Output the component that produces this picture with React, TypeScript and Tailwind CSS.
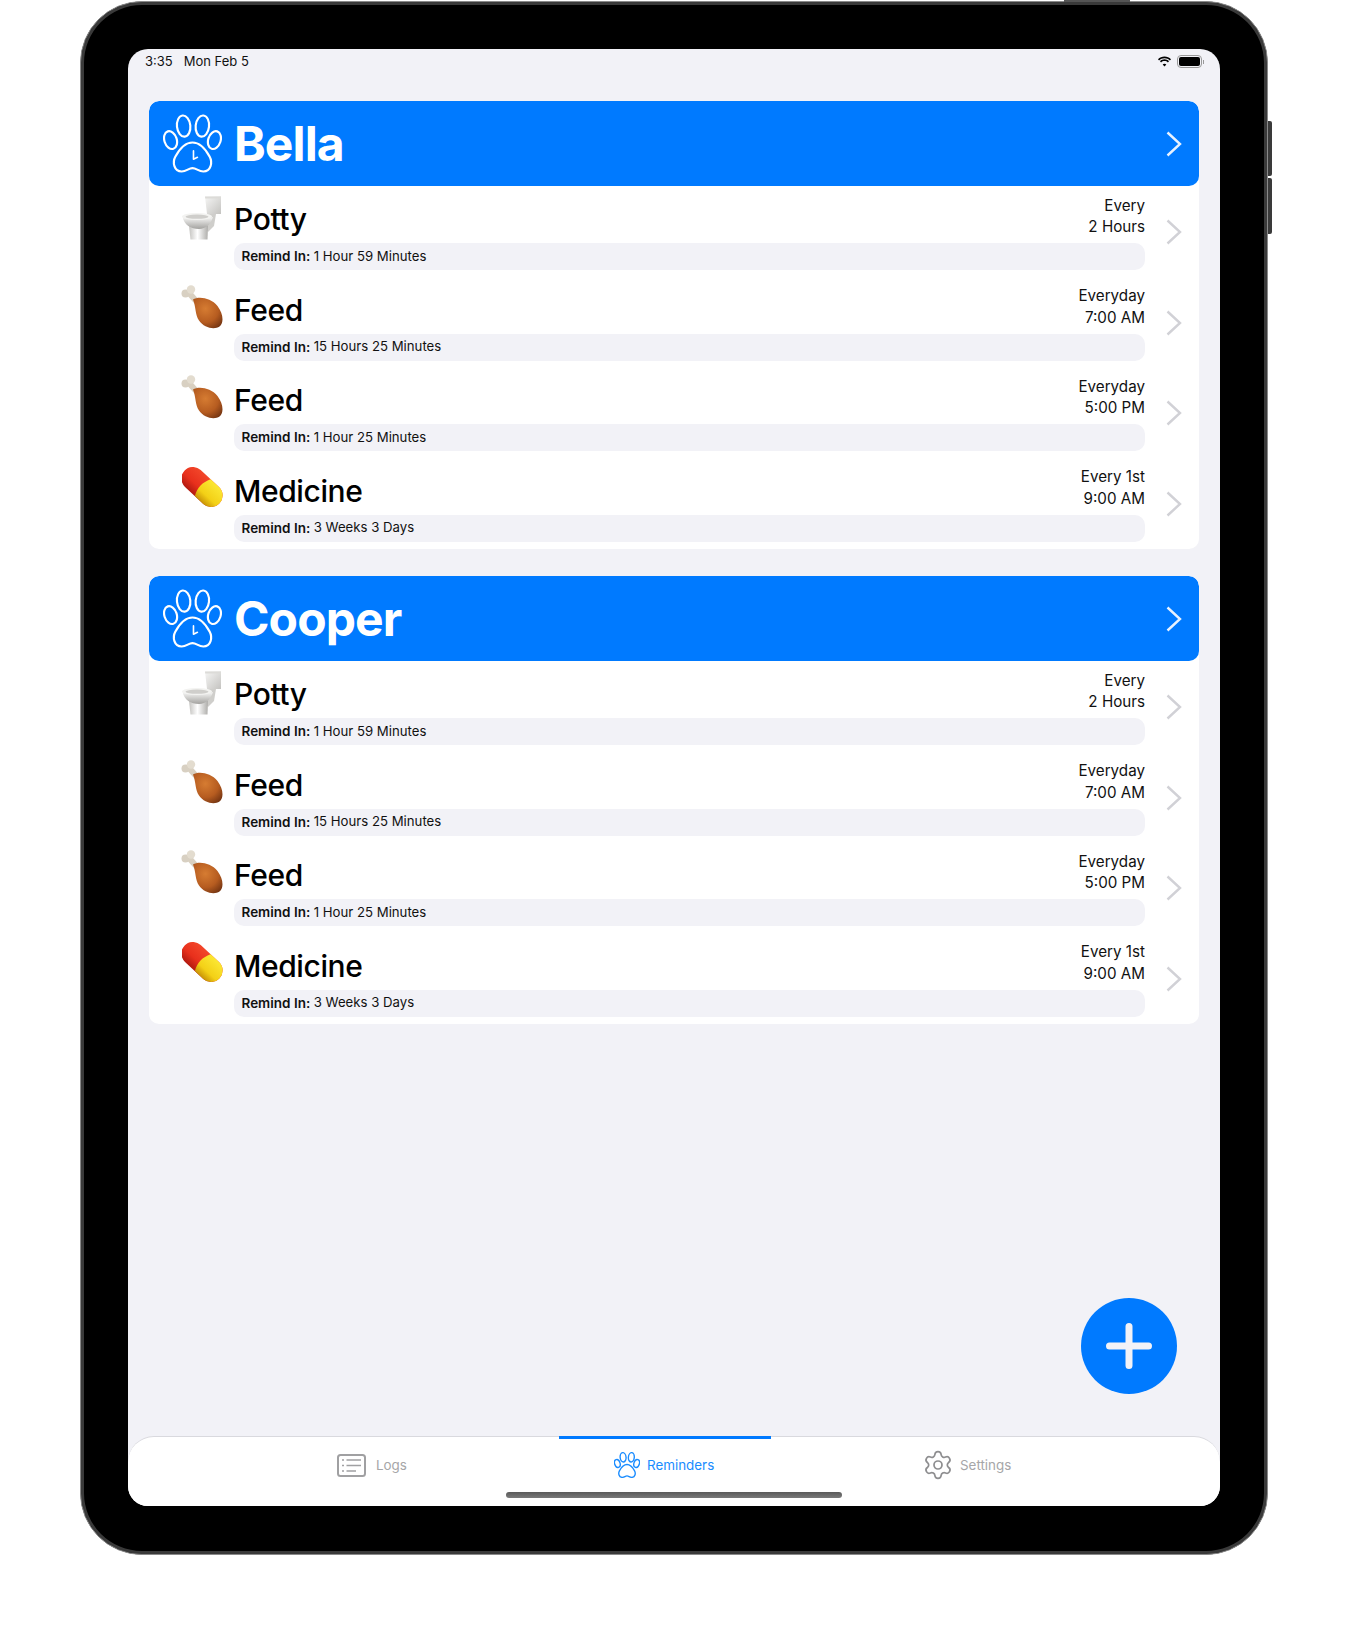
import React from "react";
import { Settings } from "lucide-react";

function Paw({ size, clock, sw }: { size: number; clock?: boolean; sw: number }) {
  return (
    <svg width={size} height={size} viewBox="0 0 60 60" fill="none" stroke="currentColor" strokeWidth={sw} strokeLinecap="round" strokeLinejoin="round">
      <ellipse cx="7.700" cy="26.500" rx="6.300" ry="9.300" transform="rotate(-18 7.700 26.500)" />
      <ellipse cx="21" cy="12.300" rx="6.800" ry="10.800" transform="rotate(-6 21 12.300)" />
      <ellipse cx="40" cy="12.300" rx="6.800" ry="10.800" transform="rotate(6 40 12.300)" />
      <ellipse cx="52.300" cy="26.500" rx="6.300" ry="9.300" transform="rotate(18 52.300 26.500)" />
      <path d="M30 29C21 29 16 37 12.500 43.500C9.500 49 11 58.500 19 58.500C24 58.500 26 55 30 55C34 55 36 58.500 41 58.500C49 58.500 50.500 49 47.500 43.500C44 37 39 29 30 29Z" />
      {clock && <path d="M31 37.500V46L35 44" strokeWidth={sw * 0.75} />}
    </svg>
  );
}

function Toilet({ id }: { id: string }) {
  return (
    <svg width="40" height="45" viewBox="0 0 40 45">
      <defs>
        <linearGradient id={`${id}t`} x1="0" x2="1" y1="0" y2="1">
          <stop offset="0" stopColor="#f6f6f5" />
          <stop offset="1" stopColor="#c4c3c0" />
        </linearGradient>
        <linearGradient id={`${id}w`} x1="0" x2="0" y1="0" y2="1">
          <stop offset="0" stopColor="#fbfbfa" />
          <stop offset="1" stopColor="#a3a29f" />
        </linearGradient>
        <linearGradient id={`${id}s`} x1="0" x2="1" y1="0" y2="0">
          <stop offset="0" stopColor="#c4c3c0" />
          <stop offset="0.45" stopColor="#ffffff" />
          <stop offset="1" stopColor="#aeadaa" />
        </linearGradient>
      </defs>
      <path d="M23 0.500H39V18H25Z" fill={`url(#${id}t)`} />
      <path d="M23 0.500H39V2.500H23.200Z" fill="#dcdbd8" />
      <path d="M24 18H34L32 30L26 36L20 26Z" fill="#cfcecb" />
      <path d="M7 30H26L25.500 43.500H8.500Z" fill={`url(#${id}s)`} />
      <path d="M0.500 20.500C2 29 9 33 17 33C24 33 29 28 31 21C22 24 8 24 0.500 20.500Z" fill={`url(#${id}w)`} />
      <ellipse cx="15" cy="20.500" rx="15" ry="3.500" fill="#f3f3f1" />
      <ellipse cx="15" cy="20.700" rx="11.500" ry="2.100" fill="#cfcecb" />
    </svg>
  );
}

function Drumstick({ id }: { id: string }) {
  return (
    <svg width="42" height="44" viewBox="0 0 42 44">
      <defs>
        <radialGradient id={id} cx="0.42" cy="0.36" r="0.72">
          <stop offset="0" stopColor="#d67c32" />
          <stop offset="0.62" stopColor="#b65c20" />
          <stop offset="1" stopColor="#7a3813" />
        </radialGradient>
      </defs>
      <path d="M8 8L16 17" stroke="#d9d0c1" strokeWidth="6" />
      <circle cx="4.500" cy="8.500" r="4" fill="#d8d0c2" />
      <circle cx="10" cy="4.500" r="4.200" fill="#e3dccf" />
      <path d="M12 14.500C18 11 30 13 36.500 21C42.500 29 43 38 38.500 41.500C33.500 45 23 43 18 35.500C14 29.500 15 22 12 14.500Z" fill={`url(#${id})`} />
    </svg>
  );
}

function Pill({ id }: { id: string }) {
  return (
    <svg width="41" height="41" viewBox="0 0 41 41">
      <defs>
        <linearGradient id={`${id}r`} x1="0" x2="0" y1="0" y2="1">
          <stop offset="0" stopColor="#f2462a" />
          <stop offset="0.6" stopColor="#e8301c" />
          <stop offset="1" stopColor="#b31a10" />
        </linearGradient>
        <linearGradient id={`${id}y`} x1="0" x2="0" y1="0" y2="1">
          <stop offset="0" stopColor="#fbe733" />
          <stop offset="0.65" stopColor="#f3d016" />
          <stop offset="1" stopColor="#c99406" />
        </linearGradient>
      </defs>
      <g transform="rotate(43 20 20)">
        <rect x="-4" y="8.500" width="48" height="23" rx="11.500" fill={`url(#${id}r)`} />
        <path d="M21 8.500H32.500A11.500 11.500 0 0 1 32.500 31.500H21C17 24 17 16 21 8.500Z" fill={`url(#${id}y)`} />
      </g>
    </svg>
  );
}

function Chevron({ color }: { color: string }) {
  return (
    <svg width="16" height="26" viewBox="0 0 16 26" fill="none" stroke={color} strokeWidth="2.400">
      <path d="M1.500 1.500L14 13L1.500 24.500" />
    </svg>
  );
}

type Row = { kind: "toilet" | "feed" | "pill"; title: string; a: string; b: string; remind: string };

const rows: Row[] = [
  { kind: "toilet", title: "Potty", a: "Every", b: "2 Hours", remind: "1 Hour 59 Minutes" },
  { kind: "feed", title: "Feed", a: "Everyday", b: "7:00 AM", remind: "15 Hours 25 Minutes" },
  { kind: "feed", title: "Feed", a: "Everyday", b: "5:00 PM", remind: "1 Hour 25 Minutes" },
  { kind: "pill", title: "Medicine", a: "Every 1st", b: "9:00 AM", remind: "3 Weeks 3 Days" },
];

function ReminderRow({ r, id }: { r: Row; id: string }) {
  return (
    <div className="flex h-[90.500px]">
      <div className={`flex w-[85px] shrink-0 justify-end ${r.kind === "toilet" ? "pt-[10px] pr-[12px]" : r.kind === "feed" ? "pt-[8px] pr-[11px]" : "pt-[9px] pr-[11px]"}`}>
        {r.kind === "toilet" && <Toilet id={id} />}
        {r.kind === "feed" && <Drumstick id={id} />}
        {r.kind === "pill" && <Pill id={id} />}
      </div>
      <div className="flex w-[911px] shrink-0 flex-col">
        <div className="flex h-[57px] justify-between">
          <div className="pt-[13px] text-[30px] leading-[40px] font-medium tracking-[-0.4px] text-black">{r.title}</div>
          <div className="pt-[8.500px] text-right text-[15.200px] leading-[21.500px] text-[#111]">
            <div>{r.a}</div>
            <div>{r.b}</div>
          </div>
        </div>
        <div className="flex h-[27px] items-center rounded-[10px] bg-[#f2f2f7] pl-[7.500px] text-[#111]">
          <span className="text-[13.500px] font-semibold">Remind In:</span>
          <span className="ml-[3.500px] text-[13.200px]">{r.remind}</span>
        </div>
      </div>
      <div className="flex flex-1 items-start pt-[33px] pl-[21px]">
        <Chevron color="#d1d1d6" />
      </div>
    </div>
  );
}

function Group({ name, idp }: { name: string; idp: string }) {
  return (
    <section className="overflow-hidden rounded-[10px] bg-white">
      <div className="flex h-[85px] items-center rounded-[10px] bg-[#007aff] pr-[17px] pl-[14px] text-white">
        <Paw size={59} clock sw={2.200} />
        <div className="ml-[12px] flex-1 text-[48px] leading-none font-bold tracking-[-0.9px]">{name}</div>
        <svg width="16" height="26" viewBox="0 0 16 26" fill="none" stroke="#e8f2ff" strokeWidth="2.400">
          <path d="M1.500 1.500L14 13L1.500 24.500" />
        </svg>
      </div>
      <div className="h-[363px]">
        {rows.map((r, i) => (
          <ReminderRow key={i} r={r} id={`${idp}${i}`} />
        ))}
      </div>
    </section>
  );
}

function Tab({ label, active, children, w, gap }: { label: string; active?: boolean; children: React.ReactNode; w: string; gap: string }) {
  return (
    <div className={`flex items-center text-[13.400px] ${gap} ${w} ${active ? "text-[#1a8cff]" : "text-[#a6a6a8]"}`}>
      {children}
      <span>{label}</span>
    </div>
  );
}

export default function App() {
  return (
    <div className="h-[1650px] w-[1348px] bg-white pt-px pl-[80px] font-['Inter','Liberation_Sans',sans-serif]">
      <div className="relative h-[1554px] w-[1188px] rounded-[62px] border border-[#8a8a8a] bg-black px-[47px] pt-[47px] shadow-[inset_0_0_0_3px_#3a3a3a]">
        <div className="absolute top-[-2px] right-[137px] h-[2px] w-[66px] bg-[#555]" />
        <div className="absolute top-[119px] right-[-5px] h-[55px] w-[4px] rounded-r-[2px] bg-[#3a3a3a]" />
        <div className="absolute top-[176px] right-[-5px] h-[56px] w-[4px] rounded-r-[2px] bg-[#3a3a3a]" />
        <div className="relative flex h-[1457px] w-[1092px] flex-col overflow-hidden rounded-[20px] bg-[#f2f2f7]">
          <div className="flex h-[52px] shrink-0 items-start justify-between pt-[2px] pr-[16px] pl-[17px] text-[13px] leading-[20px] text-[#111]">
            <div className="flex gap-[11px]">
              <span>3:35</span>
              <span>Mon Feb 5</span>
            </div>
            <div className="flex items-center gap-[5px] pt-[4px]">
              <svg width="15" height="11" viewBox="0 0 15 11" fill="#000">
                <path d="M7.500 2.200C9.600 2.200 11.500 3 12.900 4.400L14 3.200C12.300 1.500 10 0.500 7.500 0.500C5 0.500 2.700 1.500 1 3.200L2.100 4.400C3.500 3 5.400 2.200 7.500 2.200Z" />
                <path d="M7.500 5C8.800 5 10 5.500 10.900 6.400L12 5.200C10.800 4 9.200 3.300 7.500 3.300C5.800 3.300 4.200 4 3 5.200L4.100 6.400C5 5.500 6.200 5 7.500 5Z" />
                <path d="M7.500 7.700C6.800 7.700 6.200 8 5.700 8.400L7.500 10.500L9.300 8.400C8.800 8 8.200 7.700 7.500 7.700Z" />
              </svg>
              <div className="flex items-center">
                <div className="h-[13px] w-[25px] rounded-[4px] border border-[#999] p-px">
                  <div className="h-full w-full rounded-[2px] bg-black" />
                </div>
                <div className="ml-px h-[4px] w-[1px] bg-[#999]" />
              </div>
            </div>
          </div>
          <div className="flex flex-1 flex-col gap-[27px] pr-[21px] pl-[21px]">
            <Group name="Bella" idp="b" />
            <Group name="Cooper" idp="c" />
          </div>
          <div className="absolute top-[1249px] right-[43px] flex h-[96px] w-[96px] items-center justify-center rounded-full bg-[#007aff]">
            <svg width="46" height="46" viewBox="0 0 46 46" stroke="#f2f2f7" strokeWidth="7" strokeLinecap="round">
              <path d="M23 3.500V42.500M3.500 23H42.500" />
            </svg>
          </div>
          <div className="relative h-[70px] shrink-0 rounded-t-[26px] border-t border-[#d9d9de] bg-white">
            <div className="absolute top-[-1px] left-[431px] h-[3px] w-[212px] bg-[#007aff]" />
            <div className="flex h-[56px] items-center pl-[209px]">
              <Tab label="Logs" w="w-[276px]" gap="gap-[10px]">
                <svg width="29" height="23" viewBox="0 0 29 23" fill="none" stroke="#a0a0a2" strokeWidth="1.600">
                  <rect x="1" y="1" width="27" height="21" rx="2.500" strokeWidth="2" />
                  <path d="M5 6H7M9.500 6H24M5 11.500H7M9.500 11.500H24M5 17H7M9.500 17H19" />
                </svg>
              </Tab>
              <Tab label="Reminders" active w="w-[309px]" gap="gap-[7px]">
                <div className="ml-[1px]">
                  <Paw size={26} sw={3.200} />
                </div>
              </Tab>
              <Tab label="Settings" w="w-[120px]" gap="gap-[6px]">
                <Settings size={32} strokeWidth={1.300} className="text-[#8e8e90]" />
              </Tab>
            </div>
            <div className="mx-auto -mt-px h-[6px] w-[336px] rounded-full bg-gradient-to-b from-[#5a5a5a] to-[#7a7a7a]" />
          </div>
        </div>
      </div>
    </div>
  );
}
